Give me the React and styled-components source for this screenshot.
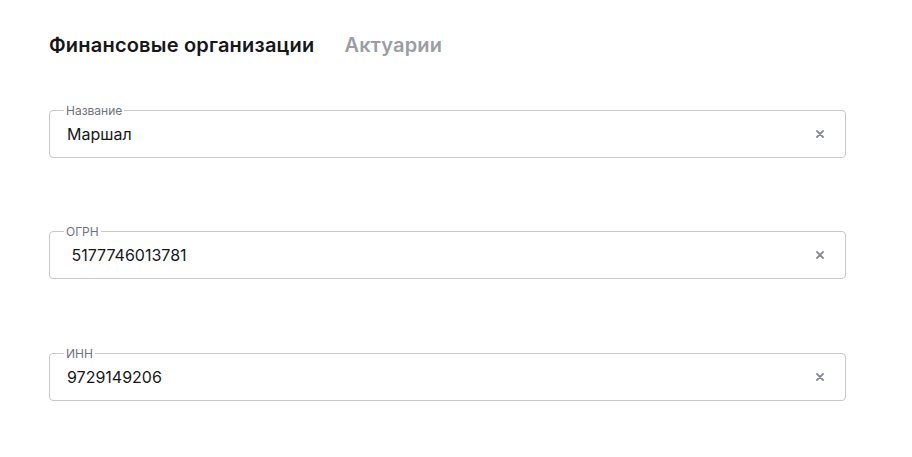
import React from "react";
import styled, { createGlobalStyle } from "styled-components";

const Global = createGlobalStyle`
  html, body { margin: 0; padding: 0; background: #fff; }
  body { font-family: Inter, "Noto Sans", sans-serif; color: #1b1b1f; }
`;

const Page = styled.div`
  width: 912px;
  height: 457px;
  box-sizing: border-box;
  padding: 33px 66px 0 49px;
`;

const Tabs = styled.div`
  display: flex;
  gap: 30px;
  margin-bottom: 53px;
`;

const Tab = styled.div`
  font-size: 20px;
  line-height: 24px;
  font-weight: 600;
  letter-spacing: 0.2px;
  color: ${(p) => (p.$active ? "#17171a" : "#9a9da4")};
  cursor: pointer;
`;

const Fields = styled.div`
  display: flex;
  flex-direction: column;
  gap: 73px;
`;

const Field = styled.div`
  position: relative;
  height: 48px;
  box-sizing: border-box;
  margin-top: ${(p) => (p.$extra ? "1px" : "0")};
  border: 1px solid #c9c9cc;
  border-radius: 4px;
  padding: 0 21px 0 17px;
  display: flex;
  align-items: center;
`;

const Label = styled.span`
  position: absolute;
  top: -6px;
  left: 14px;
  padding: 0 2px;
  background: #fff;
  font-size: 12px;
  line-height: 12px;
  color: #6f727a;
`;

const Value = styled.div`
  flex: 1;
  font-size: 16px;
  line-height: 20px;
  color: #17171a;
  white-space: pre;
`;

const Clear = styled.button`
  border: none;
  background: none;
  padding: 0;
  width: 8px;
  height: 8px;
  display: flex;
  align-items: center;
  justify-content: center;
  cursor: pointer;
`;

const ClearIcon = () => (
  <svg width="8" height="8" viewBox="0 0 8 8">
    <path d="M1 1L7 7M7 1L1 7" stroke="#878b93" strokeWidth="1.8" strokeLinecap="round" />
  </svg>
);

const fields = [
  { label: "Название", value: "Маршал" },
  { label: "ОГРН", value: " 5177746013781" },
  { label: "ИНН", value: "9729149206", extra: true },
];

export default function App() {
  return (
    <>
      <Global />
      <Page>
        <Tabs>
          <Tab $active>Финансовые организации</Tab>
          <Tab>Актуарии</Tab>
        </Tabs>
        <Fields>
          {fields.map((f) => (
            <Field key={f.label} $extra={f.extra}>
              <Label>{f.label}</Label>
              <Value>{f.value}</Value>
              <Clear aria-label="Очистить">
                <ClearIcon />
              </Clear>
            </Field>
          ))}
        </Fields>
      </Page>
    </>
  );
}
